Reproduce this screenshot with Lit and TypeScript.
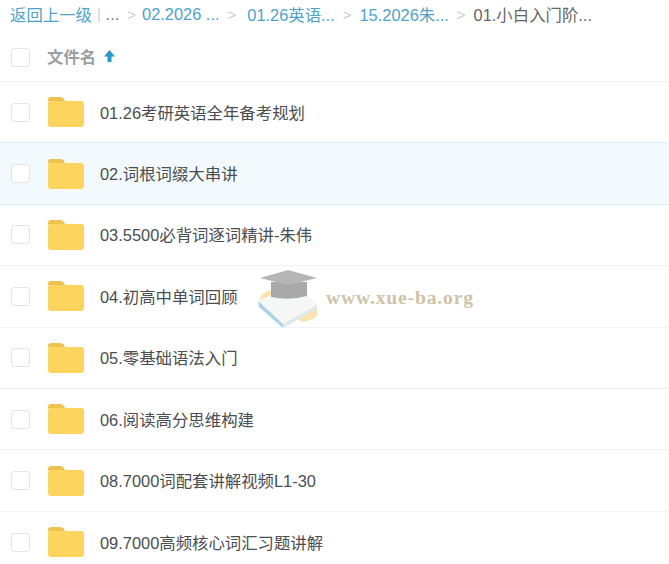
import { LitElement, html, css, svg } from "lit";
import { customElement } from "lit/decorators.js";

const rows = [
  "01.26考研英语全年备考规划",
  "02.词根词缀大串讲",
  "03.5500必背词逐词精讲-朱伟",
  "04.初高中单词回顾",
  "05.零基础语法入门",
  "06.阅读高分思维构建",
  "08.7000词配套讲解视频L1-30",
  "09.7000高频核心词汇习题讲解",
];

const crumbs = [
  { t: "02.2026 ...", cls: "link tight" },
  { t: "01.26英语...", cls: "link wide" },
  { t: "15.2026朱...", cls: "link" },
  { t: "01.小白入门阶...", cls: "cur" },
];

const folder = svg`<svg class="folder" width="36" height="30" viewBox="0 0 36 30">
  <path d="M0 3 Q0 0 3 0 H12 Q15 0 16 2 L17 4 H0 Z" fill="#efc24f"/>
  <path d="M0 6 Q0 4 2 4 H33 Q36 4 36 7 V27 Q36 30 33 30 H3 Q0 30 0 27 Z" fill="#fdd45e"/>
</svg>`;

@customElement("app-root")
export class AppRoot extends LitElement {
  static styles = css`
    :host {
      display: block;
      width: 669px;
      height: 564px;
      overflow: hidden;
      position: relative;
      background: #fff;
      font-family: "Liberation Sans", "Noto Sans CJK SC", sans-serif;
      color: #555;
    }
    .crumbs {
      height: 28px;
      display: flex;
      align-items: center;
      font-size: 16.4px;
      white-space: nowrap;
      padding-left: 10px;
    }
    .link { color: #4fa3c9; }
    .cur { color: #666; }
    .pipe { color: #ccc; margin: 0 5px; font-size: 14px; }
    .dots { color: #777; }
    .sep { color: #ccc; font-size: 15px; margin: 0 8px; }
    .tight { margin-left: -2px; }
    .wide { margin-left: 3px; }
    .head {
      height: 54px;
      box-sizing: border-box;
      display: flex;
      align-items: center;
      border-bottom: 1px solid #f2f3f4;
      padding: 5px 0 0 11px;
    }
    .head .label {
      font-size: 16.4px;
      font-weight: 700;
      color: #9a9fa3;
      margin-left: 17px;
      margin-top: -2px;
    }
    .arrow { margin-left: 7px; margin-top: -2px; }
    .check {
      width: 19px;
      height: 19px;
      box-sizing: border-box;
      border: 1.5px solid #e2e4e6;
      border-radius: 3px;
      background: #fff;
      flex: none;
    }
    .row {
      height: 61.4px;
      box-sizing: border-box;
      display: flex;
      align-items: center;
      padding-left: 11px;
      border-bottom: 1px solid #f2f3f4;
      font-size: 16.4px;
      color: #4a4e52;
    }
    .row.hover {
      background: #f3fafd;
      border-bottom-color: #dbeef6;
      box-shadow: 0 -1px 0 #dbeef6;
    }
    .row.last { border-bottom: none; }
    .folder { margin-left: 18px; flex: none; }
    .name { margin: -1px 0 0 16px; }
    .mark {
      position: absolute;
      left: 257px;
      top: 270px;
      display: flex;
      align-items: flex-start;
    }
    .mark span {
      font-family: "Liberation Serif", serif;
      font-weight: 700;
      font-size: 19.7px;
      letter-spacing: 0.8px;
      color: #cfc3a6;
      margin: 16px 0 0 7px;
    }
  `;

  render() {
    return html`
      <div class="crumbs">
        <span class="link">返回上一级</span><span class="pipe">|</span><span class="dots">...</span>
        ${crumbs.map(
          (c) => html`<span class="sep">&gt;</span><span class=${c.cls}>${c.t}</span>`
        )}
      </div>
      <div class="head">
        <div class="check"></div>
        <span class="label">文件名</span>
        <svg class="arrow" width="13" height="14" viewBox="0 0 13 14">
          <path d="M6.5 1 L12 7.5 H8.5 V13 H4.5 V7.5 H1 Z" fill="#2b97cf"/>
        </svg>
      </div>
      ${rows.map(
        (r, i) => html`<div class="row ${i === 1 ? "hover" : ""} ${i === rows.length - 1 ? "last" : ""}">
          <div class="check"></div>
          ${folder}
          <span class="name">${r}</span>
        </div>`
      )}
      <div class="mark">
        <svg width="62" height="60" viewBox="0 0 62 60">
          <path d="M2 32 Q4 22 14 20 L30 30 L12 38 Z" fill="#fbe3ad"/>
          <path d="M60 34 V46 Q56 50 44 52 L36 42 Z" fill="#fbe3ad"/>
          <path d="M1 31 L16 24 L48 22 L60 35 L26 55 Z" fill="#f5f6f6"/>
          <path d="M1 31 L26 54 L26 58 L2 37 Z" fill="#a9d3e6"/>
          <path d="M26 54 L60 35 L60 39 L26 58 Z" fill="#dfe8ea"/>
          <path d="M14 12 H50 V26 Q32 31 14 27 Z" fill="#a9a9a9"/>
          <path d="M3 8 L31 0 L60 8 L31 15 Z" fill="#b6b6b6"/>
        </svg>
        <span>www.xue-ba.org</span>
      </div>
    `;
  }
}
